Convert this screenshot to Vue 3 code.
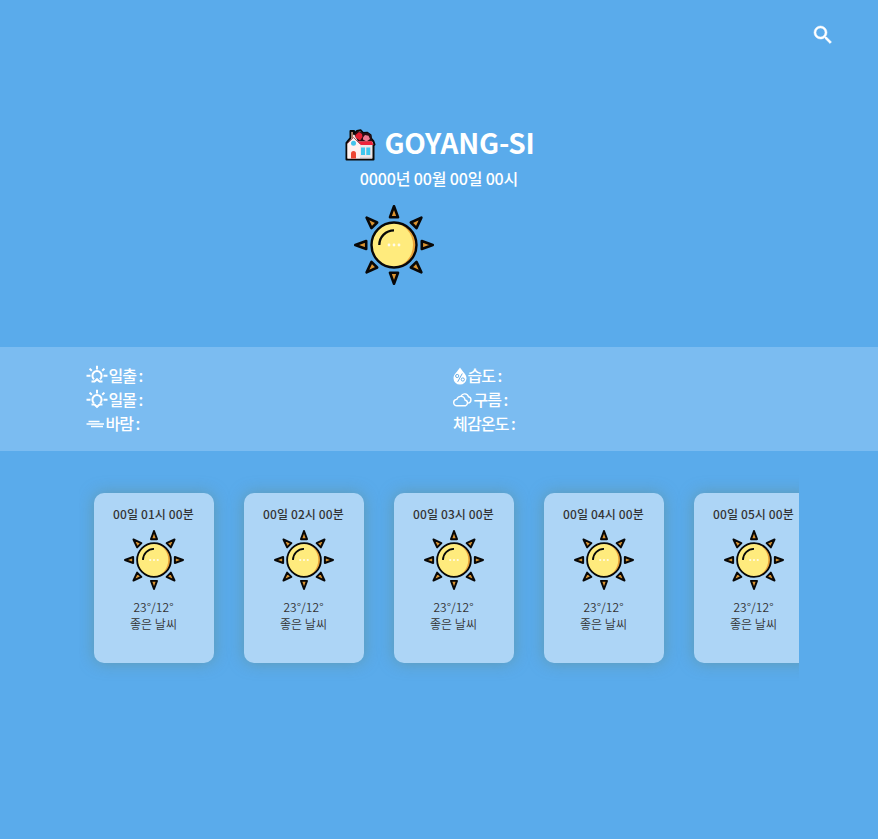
<script setup>
const rays = [0, 45, 90, 135, 180, 225, 270, 315]
const cards = [1, 2, 3, 4, 5].map((n) => ({ id: n, time: `00일 0${n}시 00분` }))
</script>

<template>
  <main class="page">
    <svg width="0" height="0" class="defs">
      <symbol id="sun" viewBox="0 0 80 80">
        <g v-for="r in rays" :key="r" :transform="`rotate(${r} 40 40)`">
          <path d="M40 1.300 44 12.200H36Z" fill="#dc9532" stroke="#080808" stroke-width="2.600" stroke-linejoin="round" />
        </g>
        <circle cx="40" cy="40" r="22" fill="#e9a33a" />
        <ellipse cx="38.500" cy="40" rx="20.500" ry="22" fill="#ffeb7d" />
        <circle cx="40" cy="40" r="22.500" fill="none" stroke="#080808" stroke-width="2.400" />
        <path d="M25.300 40A14.700 14.700 0 0 1 40 25.300" fill="none" stroke="#080808" stroke-width="2.300" />
        <g fill="#fffbea">
          <circle cx="35" cy="40" r="1.400" /><circle cx="40" cy="40" r="1.400" /><circle cx="45" cy="40" r="1.400" />
        </g>
      </symbol>
      <symbol id="rays" viewBox="0 0 22 22">
        <path d="M8 15.200A4.600 4.600 0 1 1 14 15.200M.5 11.800H4.500M17.500 11.800h4M11 1.800v3.700M3.600 4.600 5.800 6.800M18.400 4.600 16.200 6.800" fill="none" stroke="#fff" stroke-width="2" />
      </symbol>
    </svg>

    <header class="top">
      <svg class="search" viewBox="0 0 24 24">
        <path fill="#fff" stroke="#fff" stroke-width=".5" d="M15.5 14h-.79l-.28-.27A6.47 6.47 0 0 0 16 9.5 6.5 6.5 0 1 0 9.5 16c1.61 0 3.09-.59 4.23-1.57l.27.28v.79l5 4.99L20.49 19zm-6 0A4.5 4.5 0 1 1 14 9.5 4.5 4.5 0 0 1 9.5 14z" />
      </svg>
    </header>

    <section class="hero">
      <h1>
        <svg class="house" viewBox="0 0 32 32">
          <path d="M2.500 30.500V13.800L6.500 9V2H10v3l3-3 3.500-.8L19 4l4-.3 3.500 2.300.5 3.500 2.500 3 1 3-1 1v14Z" fill="#eee6e8" stroke="#080808" stroke-width="2" stroke-linejoin="round" />
          <path d="M10 5 14 2l5 2 5-.3 3 2.300.5 4 1 2.500H14Z" fill="#2a0d13" />
          <path d="M7.500 3H9v6H7.500Z" fill="#b07d64" />
          <path d="M11.500 6 15 3l3 2 .5 3-2.500 3.500-4.500-3Z" fill="#e61f32" />
          <path d="m19 8.500 2-2.500 3.500.8 1.500 3.200-3.500 2.500-3.500-2Z" fill="#ef7890" />
          <path d="m14 12.500 14-.2 1.500 3.700H17Z" fill="#ec233b" />
          <path d="m3.500 15 6-6 6.500 6.500V29.500H3.500Z" fill="#fff2ef" />
          <path d="m3.500 14.500 6-6 7 7" fill="none" stroke="#9c3942" stroke-width=".8" />
          <circle cx="9.500" cy="14.300" r="2.500" fill="#43c4eb" />
          <path d="M7 29.500v-5a2.500 2.500 0 0 1 5 0v5Z" fill="#ee4733" />
          <path d="M17 18.500h4v7.500h-4ZM22.300 18.500h4v7.500h-4Z" fill="#3fc6ee" />
          <path d="M16 28h12v1.500H16Z" fill="#dfd8dd" />
        </svg>
        <span>GOYANG-SI</span>
      </h1>
      <p class="date">0000년 00월 00일 00시</p>
      <svg class="big-sun"><use href="#sun" /></svg>
    </section>

    <section class="info">
      <ul>
        <li>
          <svg class="ic sun-ic" viewBox="0 0 22 22"><use href="#rays" /><path d="M5.500 17.500h3L11 15.200l2.500 2.300h3" fill="none" stroke="#fff" stroke-width="2" /></svg>
          <span>일출 :</span>
        </li>
        <li>
          <svg class="ic sun-ic" viewBox="0 0 22 22"><use href="#rays" /><path d="M5.500 16.500h3L11 18.900l2.500-2.400h3" fill="none" stroke="#fff" stroke-width="2" /></svg>
          <span>일몰 :</span>
        </li>
        <li>
          <svg class="ic wind" viewBox="0 0 19 10"><path d="M2.500 2.500h11M.5 5h17.500M5 7.500h12" stroke="#fff" stroke-width="1.300" /></svg>
          <span>바람 :</span>
        </li>
      </ul>
      <ul>
        <li>
          <svg class="ic drop" viewBox="0 0 14 18">
            <path d="M7 .5C5 4 .5 7.300.5 11.200a6.500 6.300 0 0 0 13 0C13.500 7.300 9 4 7 .5Z" fill="#fff" />
            <g fill="none" stroke="#68afe9" stroke-width="1"><path d="m9.300 6.500-4.600 8.300" /><circle cx="4.200" cy="9" r="1.600" /><circle cx="9.800" cy="12.500" r="1.600" /></g>
          </svg>
          <span>습도 :</span>
        </li>
        <li>
          <svg class="ic cloud" viewBox="0 0 20 14">
            <g fill="none" stroke="#fff" stroke-width="1.400">
              <path d="M4 12.800a3.200 3.200 0 0 1-.2-6.400 4.200 4.200 0 0 1 8.200.6 3 3 0 0 1 .4 5.800Z" />
              <path d="M8 3.200a4 4 0 0 1 7.500.6 3.200 3.200 0 0 1-.5 6.300" />
            </g>
          </svg>
          <span>구름 :</span>
        </li>
        <li><span>체감온도 :</span></li>
      </ul>
    </section>

    <section class="forecast">
      <article v-for="c in cards" :key="c.id" class="card">
        <h2>{{ c.time }}</h2>
        <svg class="small-sun"><use href="#sun" /></svg>
        <p>23°/12°</p>
        <p>좋은 날씨</p>
      </article>
    </section>
  </main>
</template>

<style>
body { margin: 0; background: #5aabeb; }
</style>

<style scoped>
.page {
  height: 839px;
  overflow: hidden;
  background: #5aabeb;
  color: #fff;
  font-family: "Noto Sans CJK KR", sans-serif;
}
.defs { display: block; }
h1, h2, p, ul { margin: 0; padding: 0; }
.top { display: flex; justify-content: flex-end; height: 122px; box-sizing: border-box; padding: 23px 43px 0 0; }
.search { width: 24px; height: 24px; }
.hero { display: flex; flex-direction: column; align-items: center; height: 225px; }
h1 { display: flex; align-items: center; gap: 8px; height: 42px; font-size: 28px; line-height: 38px; font-weight: 700; letter-spacing: -0.2px; }
h1 span { padding-bottom: 2px; }
.house { width: 32px; height: 32px; margin: 3px 0 0 1px; }
.date { height: 28px; line-height: 28px; font-size: 16px; font-weight: 500; letter-spacing: -0.15px; }
.big-sun { width: 80px; height: 80px; margin: 13px 90px 0 0; }
.info { display: flex; height: 104px; box-sizing: border-box; padding: 16px 0 0 86px; background: #7bbcf1; }
.info ul { width: 367px; list-style: none; }
.info li { display: flex; align-items: center; height: 24px; line-height: 24px; font-size: 16px; font-weight: 500; letter-spacing: -0.8px; word-spacing: -0.6px; white-space: pre; }
.info li svg + span { margin-left: .4px; }
.ic { flex: none; display: block; }
.sun-ic { width: 22px; height: 22px; }
.wind { width: 19px; height: 10px; margin-top: 2px; }
.drop { width: 14px; height: 18px; margin-top: 2px; }
.cloud { width: 20px; height: 14px; margin-top: 1px; }
.forecast { display: flex; gap: 30px; width: 720px; height: 210px; box-sizing: border-box; margin: 22px auto 0; padding: 20px 15px; overflow: hidden; }
.card { display: flex; flex-direction: column; align-items: center; flex: none; width: 120px; height: 170px; box-sizing: border-box; padding-top: 12px; border-radius: 10px; background: #add5f6; color: #333; box-shadow: 0 0 15px rgba(100, 145, 145, .65); }
h2 { height: 18px; line-height: 18px; font-size: 12px; font-weight: 500; letter-spacing: .12px; margin-right: 1px; white-space: nowrap; }
.small-sun { width: 60px; height: 60px; margin: 7px 0 8px; }
.card p { height: 17px; line-height: 17px; font-size: 12px; font-weight: 350; letter-spacing: .05px; margin-right: 1px; }
</style>
